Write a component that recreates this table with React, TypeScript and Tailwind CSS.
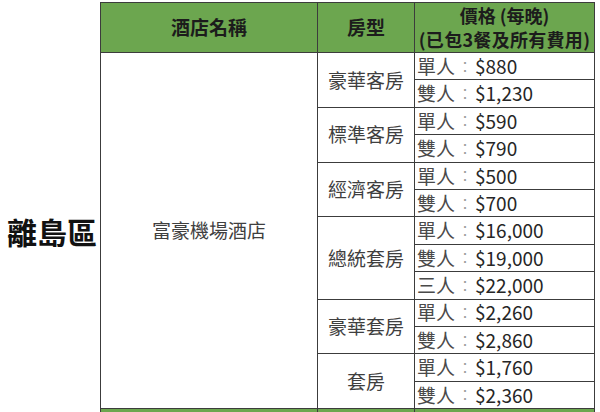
import React from 'react'

type Room = { name: string; prices: string[] }

const rooms: Room[] = [
  { name: '豪華客房', prices: ['單人：$880', '雙人：$1,230'] },
  { name: '標準客房', prices: ['單人：$590', '雙人：$790'] },
  { name: '經濟客房', prices: ['單人：$500', '雙人：$700'] },
  { name: '總統套房', prices: ['單人：$16,000', '雙人：$19,000', '三人：$22,000'] },
  { name: '豪華套房', prices: ['單人：$2,260', '雙人：$2,860'] },
  { name: '套房', prices: ['單人：$1,760', '雙人：$2,360'] },
]

const font = { fontFamily: '"Noto Sans CJK TC", "Noto Sans", sans-serif' }

function PriceText({ text }: { text: string }) {
  const [who, amount] = text.split('：')
  return (
    <span className="flex items-center whitespace-nowrap">
      <span className="text-[#4a4a4a]">{who}</span>
      <span className="w-[20px] text-center text-[14px] text-[#9a9a9a]">：</span>
      <span className="text-[#262626]">{amount}</span>
    </span>
  )
}

export default function App() {
  let row = 2
  const cells: React.ReactNode[] = []
  rooms.forEach(room => {
    const start = row
    cells.push(
      <div
        key={room.name}
        className="bg-white flex items-center justify-center text-[19px] text-[#3f3f3f] col-start-2"
        style={{ gridRow: `${start} / span ${room.prices.length}` }}
      >
        {room.name}
      </div>
    )
    room.prices.forEach((p, i) => {
      cells.push(
        <div
          key={room.name + i}
          className="bg-white flex items-center pl-[2px] text-[19px] col-start-3"
          style={{ gridRow: `${start + i}` }}
        >
          <PriceText text={p} />
        </div>
      )
    })
    row += room.prices.length
  })

  return (
    <div className="w-[600px] h-[412px] overflow-hidden bg-white pt-[2px]" style={font}>
      <div className="flex">
        <div className="w-[100px] flex flex-col">
          <div className="h-[51px]" />
          <div className="h-[356px] flex items-center justify-center pl-[4px] text-[30px] font-bold text-[#111] leading-none">
            離島區
          </div>
        </div>
        <div className="grid grid-cols-[216px_96px_179px] grid-rows-[49px_repeat(13,26.4px)_40px] gap-px p-px bg-[#3c3c3c]">
          <div className="bg-[#6ca64f] flex items-center justify-center text-[19px] font-bold text-[#1c1c1c]">
            酒店名稱
          </div>
          <div className="bg-[#6ca64f] flex items-center justify-center text-[19px] font-bold text-[#1c1c1c]">
            房型
          </div>
          <div className="bg-[#6ca64f] flex flex-col items-center justify-center gap-[1px] text-[18px] font-bold text-[#1c1c1c] leading-[23px] whitespace-nowrap">
            <span>價格 (每晚)</span>
            <span className="tracking-[0.3px]">(已包3餐及所有費用)</span>
          </div>
          <div className="bg-white flex items-center justify-center text-[19px] text-[#3f3f3f] col-start-1 row-start-2 row-span-13">
            富豪機場酒店
          </div>
          {cells}
          <div className="bg-[#6ca64f] col-start-1 row-start-15" />
          <div className="bg-[#6ca64f] col-start-2 row-start-15" />
          <div className="bg-[#6ca64f] col-start-3 row-start-15" />
        </div>
      </div>
    </div>
  )
}
